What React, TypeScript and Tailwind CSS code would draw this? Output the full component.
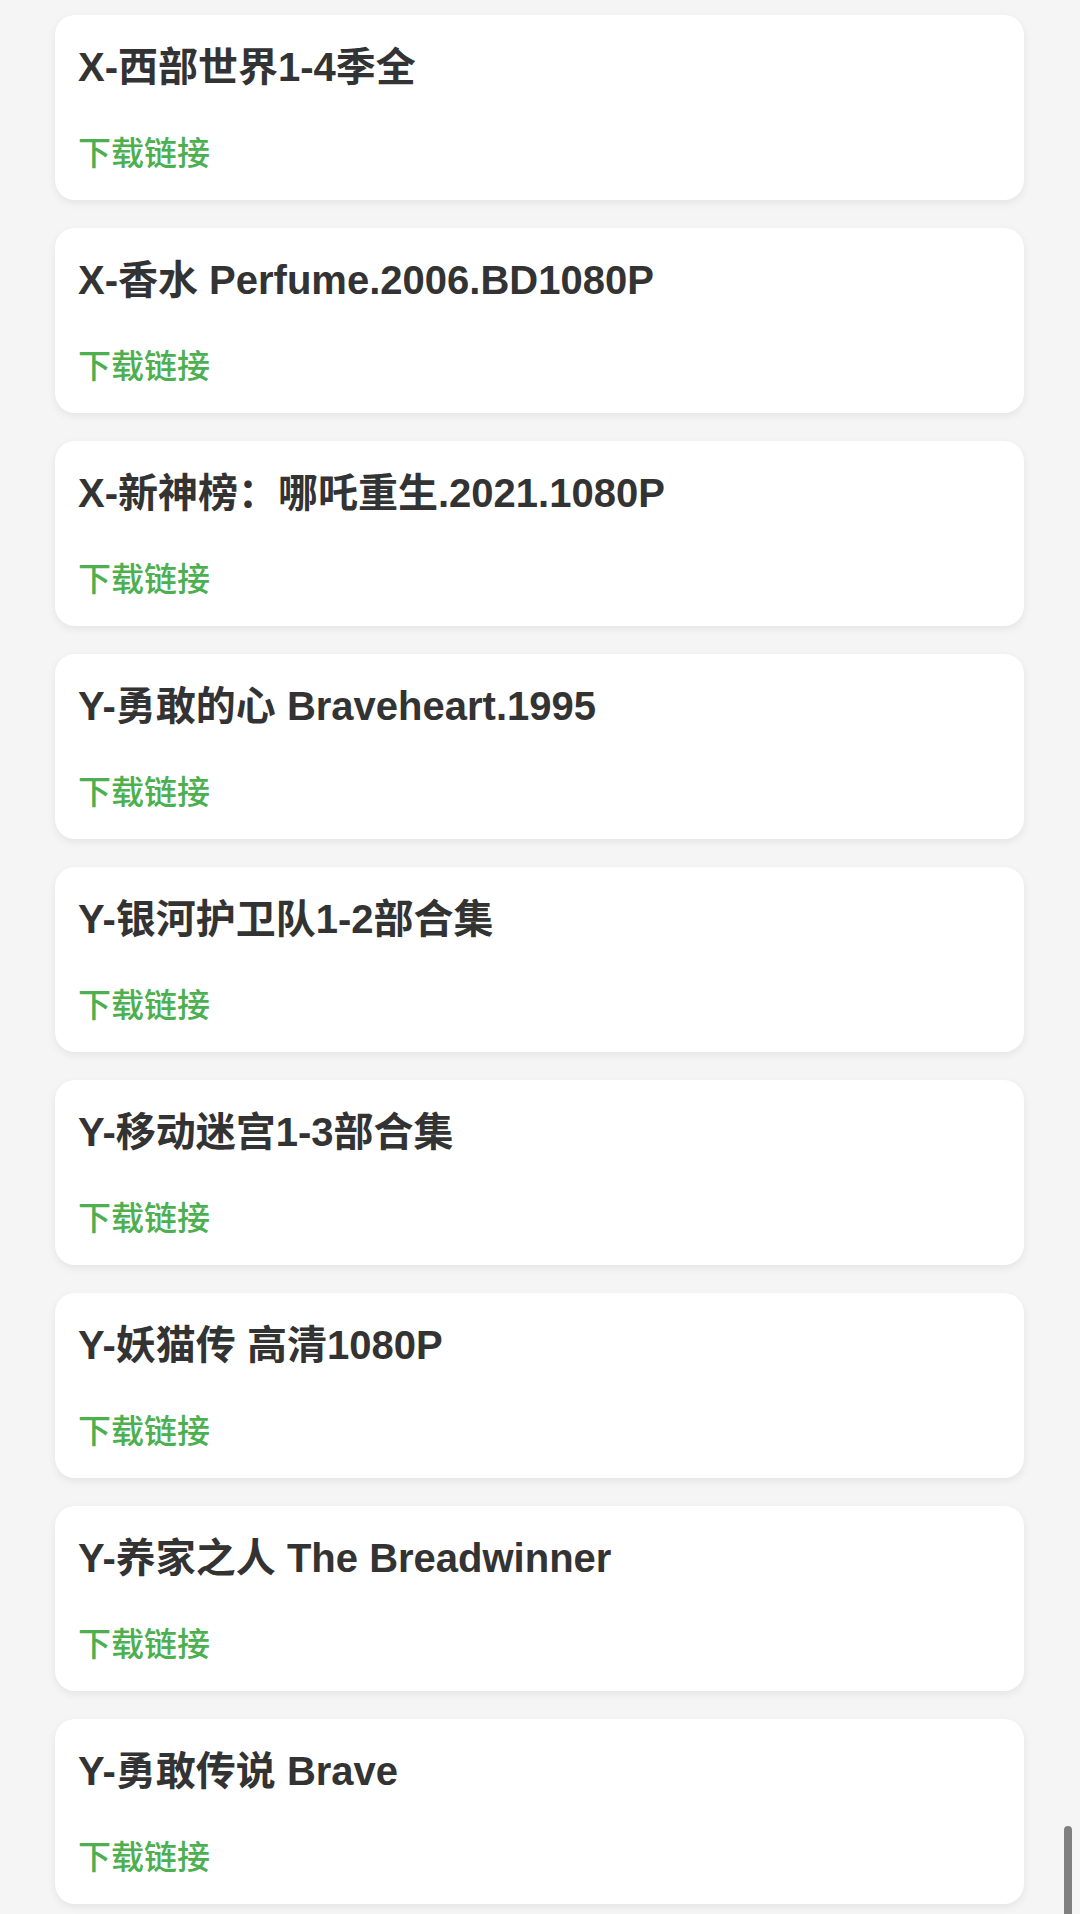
const movies = [
  "X-西部世界1-4季全",
  "X-香水 Perfume.2006.BD1080P",
  "X-新神榜：哪吒重生.2021.1080P",
  "Y-勇敢的心 Braveheart.1995",
  "Y-银河护卫队1-2部合集",
  "Y-移动迷宫1-3部合集",
  "Y-妖猫传 高清1080P",
  "Y-养家之人 The Breadwinner",
  "Y-勇敢传说 Brave",
];

const MovieCard = ({ title }: { title: string }) => {
  return (
    <div className="flex h-[185px] flex-col rounded-[20px] bg-white pl-[23px] pr-[21px] pt-[28px] shadow-[0_3px_8px_rgba(0,0,0,0.07)]">
      <h3 className="text-[40px] font-bold leading-[48px] text-[#333333]">{title}</h3>
      <a className="mt-[43px] text-[33px] font-medium leading-[40px] text-[#4caf50]" href="#">
        下载链接
      </a>
    </div>
  );
};

export default function App() {
  return (
    <div
      className="relative min-h-[1914px] overflow-hidden bg-[#f5f5f5]"
      style={{ fontFamily: '"Liberation Sans", "Noto Sans CJK SC", sans-serif' }}
    >
      <div className="flex flex-col gap-[28px] pl-[55px] pr-[56px] pt-[15px]">
        {movies.map((m) => (
          <MovieCard key={m} title={m} />
        ))}
      </div>
      {/* scroll indicator */}
      <div className="absolute right-[8px] top-[1826px] h-[100px] w-[8px] rounded-full bg-[#808080]" />
    </div>
  );
}
